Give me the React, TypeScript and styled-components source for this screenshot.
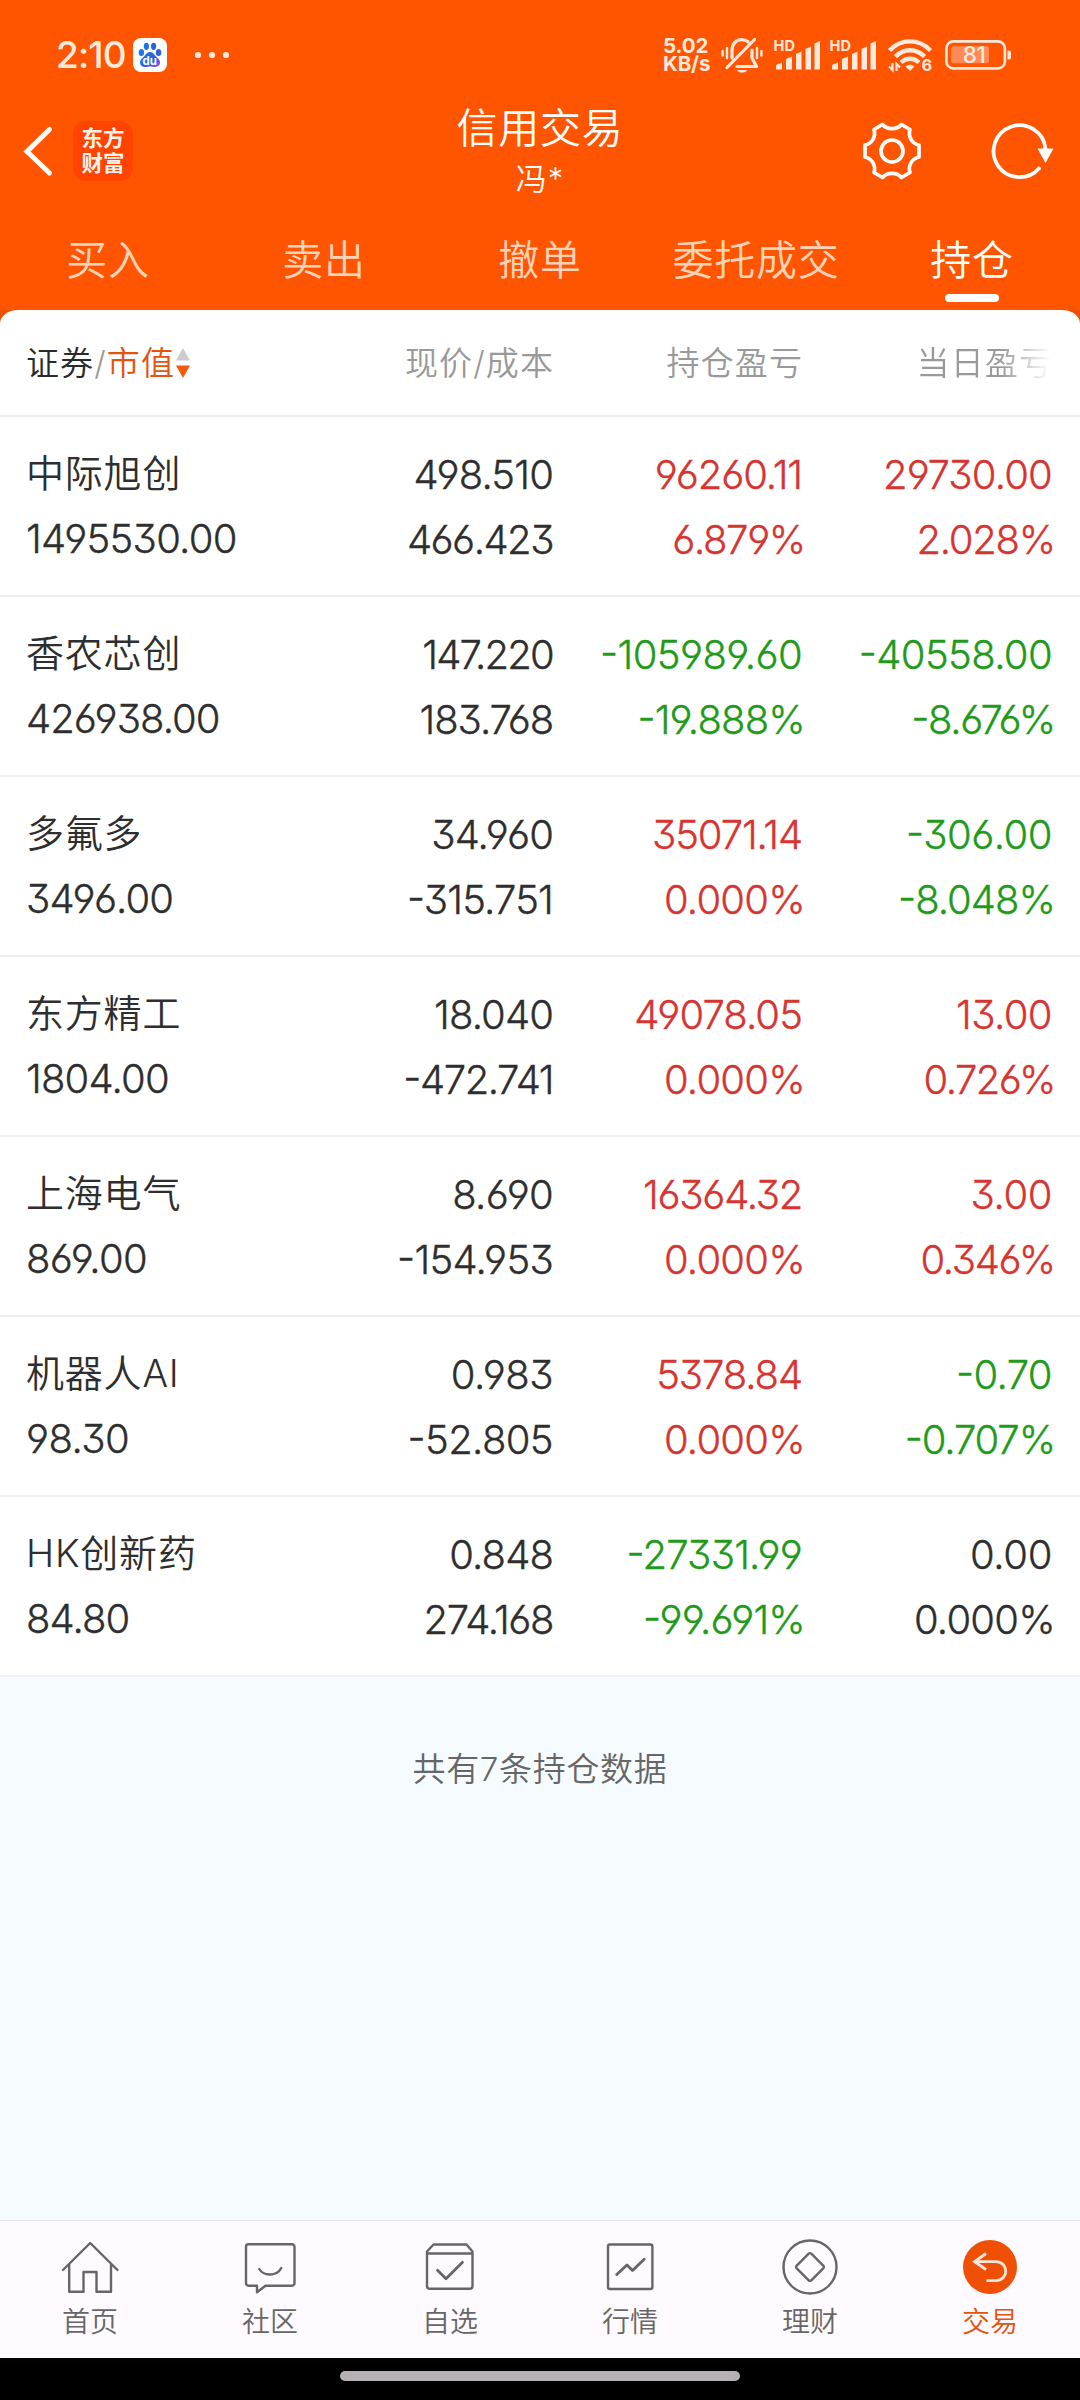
import React from "react";
import styled, { createGlobalStyle } from "styled-components";

const GlobalStyle = createGlobalStyle`
  *, *::before, *::after { box-sizing: border-box; }
  body { margin: 0; background: #000; }
`;

const Screen = styled.div`
  width: 1080px;
  height: 2400px;
  display: flex;
  flex-direction: column;
  overflow: hidden;
  background: #f6fbff;
  color: #2e2e2e;
  font-family: Inter, "Noto Sans CJK SC", sans-serif;
  font-weight: 400;
`;

const Header = styled.header`
  height: 310px;
  flex: none;
  display: flex;
  flex-direction: column;
  background: #ff5500;
  color: #fff;
`;

const StatusBar = styled.div`
  height: 96px;
  flex: none;
  display: flex;
  align-items: center;
  padding: 14px 69px 0 56px;
  color: #ffe9dd;
`;

const Clock = styled.span`
  width: 77px;
  font-size: 37px;
  line-height: 40px;
  font-weight: 500;
  letter-spacing: -0.9px;
  white-space: nowrap;
`;

const StatusRight = styled.div`
  margin-left: auto;
  display: flex;
  align-items: center;
`;

const SignalGroup = styled.div`
  display: flex;
  margin: 0 3px 0 9px;
`;

const WifiSlot = styled.div`
  margin-right: 12px;
`;

const NetSpeed = styled.div`
  width: 58px;
  display: flex;
  flex-direction: column;
  font-size: 20.5px;
  line-height: 18.5px;
  font-weight: 700;
  letter-spacing: -0.1px;
`;

const TitleBar = styled.div`
  height: 122px;
  flex: none;
  display: grid;
  grid-template-columns: 300px 1fr 300px;
`;

const TitleLeft = styled.div`
  display: flex;
  align-items: flex-start;
  padding: 25px 0 0 22px;
  gap: 18px;
`;

const BrandLogo = styled.div`
  width: 60px;
  height: 60px;
  border-radius: 13px;
  background: #ff4400;
  color: #fff3ee;
  display: flex;
  flex-direction: column;
  align-items: center;
  justify-content: center;
  font-size: 21.5px;
  line-height: 25px;
  font-weight: 700;
`;

const TitleCenter = styled.div`
  display: flex;
  flex-direction: column;
  align-items: center;
  padding-top: 7px;
`;

const Title = styled.div`
  font-size: 41px;
  line-height: 50px;
  letter-spacing: 0.7px;
  font-weight: 350;
`;

const Account = styled.div`
  font-size: 31px;
  line-height: 52px;
  font-weight: 350;
  letter-spacing: 1px;
`;

const TitleRight = styled.div`
  display: flex;
  align-items: flex-start;
  justify-content: flex-end;
  gap: 67px;
  padding: 22px 22px 0 0;
`;

const Tabs = styled.nav`
  flex: 1;
  display: grid;
  grid-template-columns: repeat(5, 1fr);
`;

const Tab = styled.div<{ $active?: boolean }>`
  display: flex;
  flex-direction: column;
  align-items: center;
  padding-top: 12px;
  font-size: 41px;
  line-height: 60px;
  letter-spacing: 0.8px;
  font-weight: 350;
  color: ${(p) => (p.$active ? "#fff" : "#ffd3b8")};
  &::after {
    content: "";
    width: 54px;
    height: 8px;
    margin-top: 4px;
    border-radius: 4px;
    background: ${(p) => (p.$active ? "#fff" : "transparent")};
  }
`;

const PanelBack = styled.div`
  flex: none;
  background: linear-gradient(#ee4f08 0 20px, #fff 20px);
`;

const Panel = styled.section`
  background: #fff;
  border-radius: 18px 18px 0 0 / 14px 14px 0 0;
`;

const columns = "26px 275px 252px 249px 250px 28px";

const HeadRow = styled.div`
  height: 107px;
  display: grid;
  grid-template-columns: ${columns};
  align-items: center;
  border-bottom: 2px solid #eeeeee;
  font-size: 33px;
  line-height: 50px;
  letter-spacing: 1.1px;
  font-weight: 350;
  color: #999;
`;

const SortHead = styled.div`
  grid-column: 2;
  display: flex;
  align-items: center;
  white-space: pre;
`;

const Dark = styled.span`
  color: #2a2a2a;
`;

const Accent = styled.span`
  margin-right: 1px;
  color: #e2540f;
`;

const HeadCell = styled.div<{ $fade?: boolean }>`
  text-align: right;
  margin-right: -1px;
  ${(p) =>
    p.$fade &&
    `background: linear-gradient(90deg, #999 0 79%, #fff 99%);
     -webkit-background-clip: text;
     background-clip: text;
     color: transparent;`}
`;

const Row = styled.div`
  height: 180px;
  display: grid;
  grid-template-columns: ${columns};
  padding-top: 24px;
  border-bottom: 2px solid #f0f0f0;
`;

const tones = { flat: "#2e2e2e", up: "#d63431", down: "#1f9a1a" };
type Tone = keyof typeof tones;

const Holding = styled.div`
  grid-column: 2;
  display: flex;
  flex-direction: column;
`;

const Name = styled.div`
  font-size: 38px;
  line-height: 64px;
  height: 65px;
  letter-spacing: 0.8px;
  font-weight: 350;
  white-space: nowrap;
`;

const FigureText = styled.div<{ $tone: Tone; $track: number; $percent: boolean }>`
  font-size: 40px;
  line-height: 65px;
  height: 65px;
  letter-spacing: ${(p) => p.$track}px;
  margin-right: ${(p) => (p.$percent ? -3 : 0)}px;
  font-weight: 300;
  -webkit-text-stroke: 0.35px currentColor;
  font-feature-settings: "case", "cv03", "cv04", "cv09";
  white-space: nowrap;
  color: ${(p) => tones[p.$tone]};
`;

/* Extra width per glyph, averaged over the string, so round digits run wide and 4/7/% run narrow. */
const glyphDelta: Record<string, number> = {
  "0": 0.8,
  "2": -0.5,
  "3": 0.5,
  "4": -1,
  "5": 0.5,
  "6": -0.5,
  "7": -1,
  "8": 0.4,
  "9": 0.8,
  ".": 1,
  "-": 1.5,
  "%": -1.5,
};

const Figure = ({ text, tone = "flat" }: { text: string; tone?: Tone }) => {
  const kern = text.includes("7.") ? -3 : 0;
  const extra = [...text].reduce((sum, ch) => sum + (glyphDelta[ch] ?? 0), kern);
  return (
    <FigureText $tone={tone} $track={-1.2 + Math.round((extra / text.length) * 100) / 100} $percent={text.endsWith("%")}>
      {text}
    </FigureText>
  );
};

const Pair = styled.div`
  display: flex;
  flex-direction: column;
  align-items: flex-end;
  padding-top: 1px;
`;

const Empty = styled.div`
  flex: 1;
  padding-top: 67px;
  text-align: center;
  font-size: 33px;
  line-height: 50px;
  letter-spacing: 0.7px;
  font-weight: 350;
  color: #666;
`;

const BottomNav = styled.nav`
  height: 138px;
  flex: none;
  display: grid;
  grid-template-columns: repeat(6, 1fr);
  background: #fffaff;
  border-top: 1px solid #dfe4e4;
`;

const NavItem = styled.div<{ $active?: boolean }>`
  display: flex;
  flex-direction: column;
  align-items: center;
  padding-top: 15px;
  font-size: 28px;
  line-height: 49px;
  font-weight: 350;
  color: ${(p) => (p.$active ? "#e2540f" : "#666")};
`;

const GestureBar = styled.div`
  height: 42px;
  flex: none;
  background: #000;
  display: flex;
  justify-content: center;
  padding-top: 13px;
  &::after {
    content: "";
    width: 400px;
    height: 10px;
    border-radius: 5px;
    background: #b5b1b5;
  }
`;

const Icon = styled.svg`
  display: block;
  flex: none;
  overflow: visible;
`;

const BaiduBadge = () => (
  <Icon width="34" height="34" viewBox="0 0 34 34">
    <defs>
      <linearGradient id="paw" x1="0" y1="0" x2="1" y2="1">
        <stop offset="0" stopColor="#1f7ae8" />
        <stop offset="0.6" stopColor="#2c5fe0" />
        <stop offset="1" stopColor="#a050e0" />
      </linearGradient>
    </defs>
    <rect width="34" height="34" rx="8" fill="#fff" />
    <ellipse cx="8.4" cy="14.4" rx="2.7" ry="3.5" fill="#2273e6" />
    <ellipse cx="13.4" cy="8.3" rx="2.6" ry="3.6" fill="#2273e6" />
    <ellipse cx="20.6" cy="8.3" rx="2.6" ry="3.6" fill="#2a62dd" />
    <ellipse cx="25.6" cy="14.4" rx="2.7" ry="3.5" fill="#2a62dd" />
    <path d="M17 14c3 0 4 2.400 6 4.600 2 2 4 3.400 4 6 0 3-2.200 4.400-5 4.400-2 0-3-.5-5-.5s-3 .5-5 .5c-2.800 0-5-1.400-5-4.400 0-2.600 2-4 4-6 2-2.200 3-4.600 6-4.600z" fill="url(#paw)" />
    <text x="16.8" y="26.800" textAnchor="middle" fontSize="11.500" fontWeight="700" fill="#fff" fontFamily="Inter, sans-serif">du</text>
  </Icon>
);

const Dots = () => (
  <Icon width="62" height="34" viewBox="0 0 62 34">
    <circle cx="31" cy="17" r="3.100" fill="#ffe9dd" />
    <circle cx="45" cy="17" r="3.100" fill="#ffe9dd" />
    <circle cx="59" cy="17" r="3.100" fill="#ffe9dd" />
  </Icon>
);

const MutedBell = () => (
  <Icon width="42" height="36" viewBox="0 0 42 36" fill="none" stroke="#ffe9dd" strokeWidth="3.200" strokeLinecap="round" strokeLinejoin="round">
    <path d="M11 21v-7.500C11 7 15 2.600 20.500 2.600c2.600 0 4.800.8 6.500 2.200M31 13v8l4.500 8.500H16" />
    <path d="M6 30.500L33.500 2.500" />
    <path d="M16 33h10c-1 1.800-2.600 2.600-5 2.600s-4-.8-5-2.600z" fill="#ffe9dd" stroke="none" />
    <path d="M1.600 14v4.500M6 11v10M36 11v10M40.400 14v4.500" strokeWidth="2.400" />
  </Icon>
);

const Signal = () => (
  <Icon width="56" height="36" viewBox="0 0 56 36" fill="#ffe9dd">
    <text x="1.600" y="14" fontSize="14.500" fontWeight="650" fontFamily="Inter, sans-serif">HD</text>
    <path d="M4 32.500v-4.500l6-2.500v7zM14 32.500V22l6-2.500v13zM24 32.500V17l5.500-2.500v18zM33.500 32.500V12l5.500-2.500v23zM42.500 32.500V6.500l5.500-2.500v28.500z" />
  </Icon>
);

const Wifi = () => (
  <Icon width="46" height="36" viewBox="0 0 46 36" fill="none" stroke="#ffe9dd" strokeWidth="4.400">
    <path d="M2.500 13.500C14 1.300 32 1.300 43.500 13.500" />
    <path d="M8.500 19.600c8.200-8.400 20.800-8.400 29 0" />
    <path d="M14 25.500c5.300-5 12.700-5 18 0" />
    <path d="M18.500 29.500c3-2.300 6-2.300 9 0l-4.500 4.500z" fill="#ffe9dd" stroke="none" />
    <path d="M5.500 26v7l-3.500-3.500M9.500 34v-7l3.500 3.500" strokeWidth="2.200" />
    <text x="34.500" y="34.300" fontSize="16.500" fontWeight="700" fill="#ffe9dd" stroke="none" fontFamily="Inter, sans-serif">6</text>
  </Icon>
);

const Battery = () => (
  <Icon width="66" height="30" viewBox="0 0 66 30">
    <rect x="1.400" y="1.400" width="58.500" height="27" rx="7" fill="none" stroke="#ffe9dd" strokeWidth="2.600" />
    <rect x="6" y="6.300" width="38" height="17" rx="2.500" fill="#ff8a55" />
    <path d="M62.500 10.500h1.500a2 2 0 0 1 2 2v5a2 2 0 0 1-2 2h-1.500z" fill="#ffe9dd" />
    <text x="29" y="23.300" textAnchor="middle" fontSize="22.500" fontWeight="500" letterSpacing="-0.600" fill="#ffe9dd" fontFamily="Inter, sans-serif">81</text>
  </Icon>
);

const BackArrow = () => (
  <Icon width="33" height="60" viewBox="0 0 33 60" fill="none" stroke="#fff" strokeWidth="5" strokeLinecap="round" strokeLinejoin="miter">
    <path d="M27.500 8.500L5 30.500l22.500 21.500" />
  </Icon>
);

const Gear = () => (
  <Icon width="62" height="66" viewBox="-31 -33 62 66" fill="none" stroke="#fff" strokeWidth="3.700" strokeLinejoin="round">
    <circle r="11" />
    <path d="M-9.500-26.500C-5-21 5-21 9.500-26.500L18-21.500C15.800-14.500 20-7.500 27-6V6C20 7.500 15.800 14.500 18 21.500L9.500 26.500C5 21-5 21-9.500 26.500L-18 21.500C-15.800 14.500-20 7.500-27 6V-6C-20-7.500-15.800-14.500-18-21.500Z" />
  </Icon>
);

const Refresh = () => (
  <Icon width="68" height="66" viewBox="0 0 68 66" fill="none" stroke="#fff" strokeWidth="3.700">
    <path d="M49 50.500A26 26 0 1 1 55.500 31" strokeLinecap="round" />
    <path d="M47.500 30.500h16l-8 14.500z" fill="#fff" stroke="none" />
  </Icon>
);

const SortArrows = () => (
  <Icon width="14" height="32" viewBox="0 0 14 32">
    <path d="M7 1l7 12.500H0z" fill="#ccc" />
    <path d="M0 18.500h14L7 31z" fill="#f55a0c" />
  </Icon>
);

const NavIcon = ({ children }: { children: React.ReactNode }) => (
  <Icon width="60" height="62" viewBox="0 0 60 62" fill="none" stroke="#666" strokeWidth="2.400" strokeLinecap="round" strokeLinejoin="round">
    {children}
  </Icon>
);

const navItems = [
  {
    label: "首页",
    art: <path d="M3 34L30.200 7 57.500 34M9.200 28.500v27.200h14.300V36h13v19.700H51V28.500" />,
  },
  {
    label: "社区",
    art: (
      <>
        <path d="M8.500 8.300h43.500a2.500 2.500 0 0 1 2.500 2.500v36.400a2.500 2.500 0 0 1-2.500 2.500H25.500l-8.500 6.500v-6.500H8.500A2.500 2.500 0 0 1 6 47.200V10.800a2.500 2.500 0 0 1 2.500-2.500z" />
        <path d="M19.300 33c4.500 7.500 17.500 7.500 22-1" />
      </>
    ),
  },
  {
    label: "自选",
    art: (
      <>
        <path d="M13.500 8.500h33l6 7v34.500a2.800 2.800 0 0 1-2.800 2.800H9.800A2.800 2.800 0 0 1 7 50V15.500zM7 17.500h45.500" />
        <path d="M17.500 34.300l8.500 8.400 16.500-16.500" strokeWidth="2.800" />
      </>
    ),
  },
  {
    label: "行情",
    art: (
      <>
        <rect x="8" y="8.500" width="44.400" height="44.500" rx="2" />
        <path d="M16.700 38.500L27 29l5.500 5.500L44.200 23.300" strokeWidth="2.800" />
      </>
    ),
  },
  {
    label: "理财",
    art: (
      <>
        <circle cx="30" cy="31" r="26.500" />
        <path d="M28.700 17.700a2 2 0 0 1 2.600 0l12.200 12.100a2 2 0 0 1 0 2.400l-12.200 12.100a2 2 0 0 1-2.600 0L16.500 32.200a2 2 0 0 1 0-2.400z" />
      </>
    ),
  },
  {
    label: "交易",
    art: (
      <>
        <circle cx="30" cy="31" r="27" fill="#f05005" stroke="none" />
        <path d="M26 17.500L14.500 25.700 26 33.500M15 25.600h21c13 .5 13 18.600 0 19H26.500" stroke="#ffe6d8" strokeWidth="2.800" strokeLinejoin="miter" strokeLinecap="butt" />
      </>
    ),
  },
];

type Cell = [string, string, Tone];
const holdings: { name: string; value: string; cells: Cell[] }[] = [
  { name: "中际旭创", value: "1495530.00", cells: [["498.510", "466.423", "flat"], ["96260.11", "6.879%", "up"], ["29730.00", "2.028%", "up"]] },
  { name: "香农芯创", value: "426938.00", cells: [["147.220", "183.768", "flat"], ["-105989.60", "-19.888%", "down"], ["-40558.00", "-8.676%", "down"]] },
  { name: "多氟多", value: "3496.00", cells: [["34.960", "-315.751", "flat"], ["35071.14", "0.000%", "up"], ["-306.00", "-8.048%", "down"]] },
  { name: "东方精工", value: "1804.00", cells: [["18.040", "-472.741", "flat"], ["49078.05", "0.000%", "up"], ["13.00", "0.726%", "up"]] },
  { name: "上海电气", value: "869.00", cells: [["8.690", "-154.953", "flat"], ["16364.32", "0.000%", "up"], ["3.00", "0.346%", "up"]] },
  { name: "机器人AI", value: "98.30", cells: [["0.983", "-52.805", "flat"], ["5378.84", "0.000%", "up"], ["-0.70", "-0.707%", "down"]] },
  { name: "HK创新药", value: "84.80", cells: [["0.848", "274.168", "flat"], ["-27331.99", "-99.691%", "down"], ["0.00", "0.000%", "flat"]] },
];

const tabs = ["买入", "卖出", "撤单", "委托成交", "持仓"];

export default function App() {
  return (
    <Screen lang="zh-CN">
      <GlobalStyle />
      <Header>
        <StatusBar>
          <Clock>2:10</Clock>
          <BaiduBadge />
          <Dots />
          <StatusRight>
            <NetSpeed>
              <span>5.02</span>
              <span>KB/s</span>
            </NetSpeed>
            <MutedBell />
            <SignalGroup>
              <Signal />
              <Signal />
            </SignalGroup>
            <WifiSlot>
              <Wifi />
            </WifiSlot>
            <Battery />
          </StatusRight>
        </StatusBar>
        <TitleBar>
          <TitleLeft>
            <BackArrow />
            <BrandLogo>
              <span>东方</span>
              <span>财富</span>
            </BrandLogo>
          </TitleLeft>
          <TitleCenter>
            <Title>信用交易</Title>
            <Account>冯*</Account>
          </TitleCenter>
          <TitleRight>
            <Gear />
            <Refresh />
          </TitleRight>
        </TitleBar>
        <Tabs>
          {tabs.map((t) => (
            <Tab key={t} $active={t === "持仓"}>
              {t}
            </Tab>
          ))}
        </Tabs>
      </Header>
      <PanelBack>
        <Panel>
          <HeadRow>
            <SortHead>
              <Dark>证券</Dark>/<Accent>市值</Accent>
              <SortArrows />
            </SortHead>
            <HeadCell>现价/成本</HeadCell>
            <HeadCell>持仓盈亏</HeadCell>
            <HeadCell $fade>当日盈亏</HeadCell>
          </HeadRow>
          {holdings.map((h) => (
            <Row key={h.name}>
              <Holding>
                <Name>{h.name}</Name>
                <Figure text={h.value} />
              </Holding>
              {h.cells.map(([top, bottom, tone], i) => (
                <Pair key={i}>
                  <Figure text={top} tone={tone} />
                  <Figure text={bottom} tone={tone} />
                </Pair>
              ))}
            </Row>
          ))}
        </Panel>
      </PanelBack>
      <Empty>共有7条持仓数据</Empty>
      <BottomNav>
        {navItems.map((n) => (
          <NavItem key={n.label} $active={n.label === "交易"}>
            <NavIcon>{n.art}</NavIcon>
            {n.label}
          </NavItem>
        ))}
      </BottomNav>
      <GestureBar />
    </Screen>
  );
}
